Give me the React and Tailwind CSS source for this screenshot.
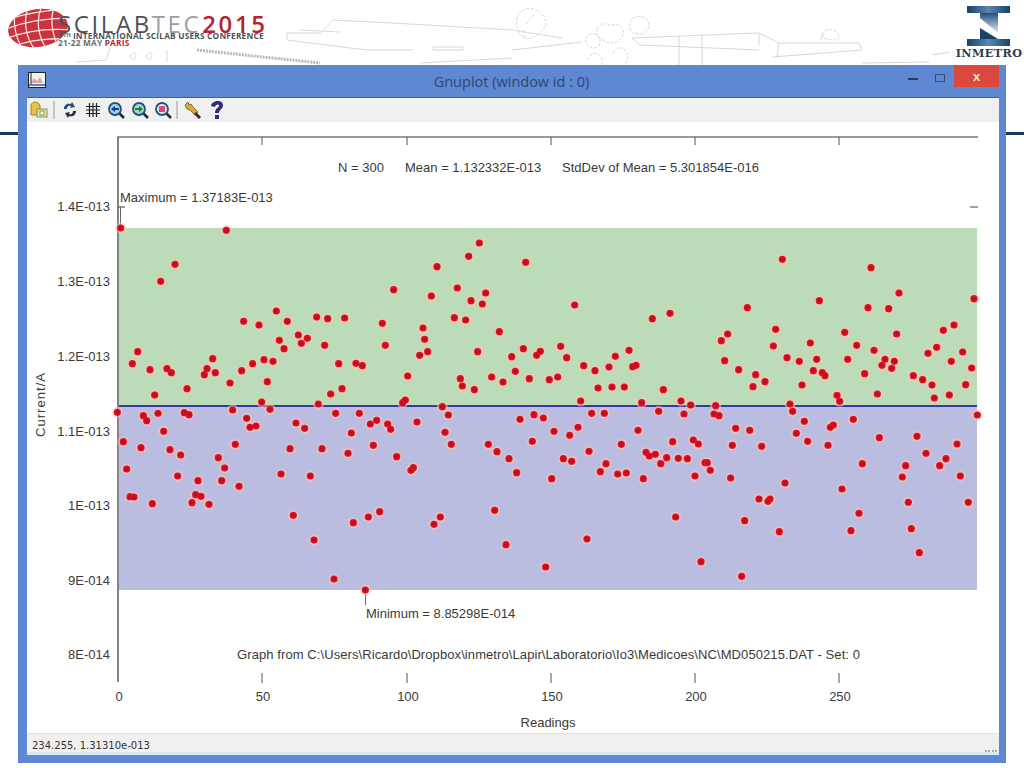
import React from 'react';

// Dot positions read off the plot, grouped by the crop they were read from: [left, top, [x, y, ...]] at 3x
const dotGroups = [
  [110, 220, [32,24,349,31,195,133,152,184,851,209,499,273,620,291,653,296,704,294,401,304,532,304,447,315,817,310,565,345,592,355,508,361,574,370,644,376,826,376,522,386,83,395,308,416,462,419,489,424,67,431,428,431,686,431,738,430,757,437,120,449,171,446,184,458,291,446,283,464,316,458,395,452,360,489,472,485,231,506,696,506,662,522,134,525,455,546,625,552,878,548]],
  [110, 400, [22,37,100,47,110,62,144,40,223,38,237,44,368,30,410,55,420,82,438,78,480,28,558,69,584,85,677,40,748,40,781,72,800,61,833,72,842,88,724,99,161,94,40,125,376,133,93,143,180,149,212,165,540,146,636,146,714,160,790,136,860,170,325,173,344,204,50,207,203,228,264,242,335,242,513,222,601,228,387,259,257,284,273,289,60,290,72,291,246,308,127,311,297,313,550,346,809,335,775,351,730,368,612,420,672,537,766,570]],
  [400, 220, [238,69,206,109,377,127,111,140,172,204,257,219,94,228,213,242,247,252,524,255,810,280,163,293,197,300,757,296,69,324,298,335,74,358,83,395,59,406,233,395,370,386,335,410,421,394,410,406,482,379,500,413,687,391,646,409,551,437,585,452,627,441,698,440,708,436,23,468,181,476,187,498,223,509,275,471,309,486,346,454,388,476,448,479,473,471,594,504,636,501,673,501,790,509,16,540,542,543,725,548,843,543]],
  [400, 400, [127,20,145,45,51,66,360,58,402,44,430,54,575,40,613,40,776,34,852,42,135,97,154,133,462,94,509,106,534,82,714,91,265,133,291,155,397,124,327,176,664,133,818,125,567,154,738,157,748,168,766,163,800,173,835,175,862,176,490,176,515,184,618,191,782,191,40,203,33,211,350,218,601,215,653,222,679,219,455,236,730,236,284,331,121,351,102,373,827,351,561,417,318,434,437,501]],
  [690, 220, [277,118,543,143,627,219,852,236,388,242,172,263,534,263,596,266,257,328,464,337,113,342,94,362,620,342,792,315,760,331,250,378,361,369,500,376,552,391,740,382,714,400,291,413,104,422,328,424,380,418,473,418,585,418,613,424,576,436,605,445,818,396,784,424,845,444,146,449,370,452,397,458,405,467,197,464,225,485,189,500,336,495,524,461,670,467,698,479,726,495,827,494,441,526,449,544,562,522,733,534,778,525,300,552,2,555]],
  [690, 400, [77,17,308,34,72,42,87,47,343,64,490,58,430,75,421,82,862,45,137,85,179,91,319,100,568,113,681,109,10,120,25,132,127,136,215,139,353,124,414,136,801,132,708,160,768,176,647,197,749,197,517,191,45,188,52,188,61,211,15,228,122,234,637,231,811,228,285,249,456,267,207,297,240,297,234,304,655,307,835,307,507,340,164,362,268,395,483,392,664,386,688,458,33,485,155,529]],
];

const dots = dotGroups.flatMap(([left, top, list]) => {
  const out = [];
  for (let i = 0; i < list.length; i += 2) {
    out.push([left + list[i] / 3, top + list[i + 1] / 3]);
  }
  return out;
});

const yLabels = [
  ['1.4E-013', 207],
  ['1.3E-013', 282],
  ['1.2E-013', 357],
  ['1.1E-013', 432],
  ['1E-013', 506],
  ['9E-014', 581],
  ['8E-014', 655],
];

const xLabels = [
  ['0', 119],
  ['50', 263],
  ['100', 408],
  ['150', 552],
  ['200', 696],
  ['250', 840],
];

const plotText = "fill-[#3a3a3a] text-[13px] font-['Liberation_Sans',sans-serif]";

function Plot() {
  return (
    <svg viewBox="27 122 972 611" className="block w-full h-full">
      <rect x="119" y="228" width="858" height="178" fill="#bcdcb9" />
      <rect x="119" y="406" width="858" height="184" fill="#babce0" />
      <line x1="119" y1="406" x2="977" y2="406" stroke="#0a0a8c" strokeWidth="1.5" />
      <path d="M118 682V137H978" fill="none" stroke="#333" strokeWidth="1.2" />
      <path d="M118 207h7M970 207h8" stroke="#444" strokeWidth="1" />
      <path d="M120.500 207v21M365.500 590v15" stroke="#666" strokeWidth="1" />
      {xLabels.slice(1).map(([, x]) => (
        <path key={x} d={`M${x - 1} 137v8M${x - 1} 673v10`} stroke="#555" strokeWidth="1" />
      ))}

      {dots.map(([x, y], i) => (
        <circle key={`h${i}`} cx={x} cy={y} r="5.500" fill="#ffc4ae" fillOpacity="0.55" />
      ))}
      {dots.map(([x, y], i) => (
        <g key={i}>
          <circle cx={x} cy={y} r="3.600" fill="#e50f1f" />
          <circle cx={x} cy={y} r="2.200" fill="#b3122a" />
        </g>
      ))}

      {yLabels.map(([label, y]) => (
        <text key={label} x="110" y={y + 4} textAnchor="end" className={plotText}>{label}</text>
      ))}
      {xLabels.map(([label, x]) => (
        <text key={label} x={x} y="701" textAnchor="middle" className={plotText}>{label}</text>
      ))}
      <text x="120" y="202" className={plotText}>Maximum = 1.37183E-013</text>
      <text x="366" y="618" className={plotText}>Minimum = 8.85298E-014</text>
      <text y="172" className={plotText}>
        <tspan x="338">N = 300</tspan>
        <tspan x="405">Mean = 1.132332E-013</tspan>
        <tspan x="562">StdDev of Mean = 5.301854E-016</tspan>
      </text>
      <text x="237" y="659" textLength="623" className={plotText}>Graph from C:\Users\Ricardo\Dropbox\inmetro\Lapir\Laboratorio\Io3\Medicoes\NC\MD050215.DAT - Set: 0</text>
      <text x="548" y="727" textAnchor="middle" className={plotText}>Readings</text>
      <text x="45" y="405" textAnchor="middle" textLength="64" transform="rotate(-90 45 405)" className={plotText}>Current/A</text>
    </svg>
  );
}

function ScilabLogo() {
  return (
    <div className="flex w-[270px] shrink-0 pl-[8px] pt-[8px]">
      <svg width="64" height="40" viewBox="0 0 64 40" className="shrink-0">
        <defs>
          <clipPath id="globe">
            <ellipse cx="30" cy="20" rx="30" ry="19" transform="rotate(-8 30 20)" />
          </clipPath>
        </defs>
        <g clipPath="url(#globe)">
          <rect width="64" height="40" fill="#c8343f" />
          <path d="M-2 12C15 6 40 2 62 1M-2 21C15 14 40 10 64 10M0 30C18 23 42 20 64 22M6 38C22 32 44 30 60 31" stroke="#f6e4e4" strokeWidth="1.300" fill="none" />
          <path d="M8 2C4 14 8 30 14 40M20 0C15 12 18 30 26 40M33 0C28 12 30 28 38 40M46 0C42 10 44 26 50 38" stroke="#f6e4e4" strokeWidth="1.300" fill="none" />
        </g>
      </svg>
      <div className="-ml-[14px] flex flex-col pt-[6px] font-['Open_Sans',sans-serif] whitespace-nowrap">
        <div className="h-[18px] text-[24px] leading-[19px] tracking-[2.600px]">
          <span className="text-[#4d5258]">SCILAB</span>
          <span className="text-[#9a9ea3]">TEC</span>
          <span className="ml-[1px] font-semibold text-[#b3262c]">2015</span>
        </div>
        <div className="text-[8.300px] leading-[7px] font-bold text-[#4d5258] tracking-[0.2px]">7ᵀᴴ INTERNATIONAL SCILAB USERS CONFERENCE</div>
        <div className="text-[8.300px] leading-[7px] font-bold text-[#6b6f74] tracking-[0.2px]">21-22 MAY <span className="text-[#b3262c]">PARIS</span></div>
      </div>
    </div>
  );
}

function Sketch() {
  // faint line drawing of the venue behind the header, in page coordinates
  return (
    <svg viewBox="70 0 880 65" className="block h-[65px] w-[880px] shrink-0 -ml-[200px]">
      <g fill="none" stroke="#d8d8d8" strokeWidth="1">
        <path d="M76 62l30-2 4-12M130 56c3-4 6-4 6 0s-5 4-6 0M146 56c3-4 6-4 6 0s-5 4-6 0M167 50v12" />
        <path d="M333 20l60 3 119 7M333 20l-13 13h-33v7l80 10h46M420 63l92-5M300 30l40 2M433 47h30v3h-30z" />
        <path d="M512 30l50 8M512 50l70-8M632 38l127-5v12M632 38l8 7 119 5M679 35v30M702 34v31M759 33l20 10h80l3 7-90 7" />
        <path d="M779 43l-2 14M820 40l4-6M862 63l67-1M932 55l18-3" />
        <g strokeDasharray="3 1.500">
          <path d="M517 18c2-8 12-12 20-8s12 14 6 20-12 10-18 8-10-12-8-20zM526 24l8-10M524 30v9" />
          <path d="M597 30c2-6 10-8 14-4 6-4 14 0 12 8s-10 10-16 8-12-6-10-12zM630 22c2-6 12-8 17-2s0 14-8 14-11-6-9-12zM586 38c2-5 8-6 12-2s2 12-4 12-10-5-8-10z" />
          <path d="M822 34c2-5 10-6 14-2s4 8 0 8-16 0-14-6zM588 60c1-5 6-8 10-6s6 8 3 12M613 54c2-6 8-8 12-4s4 10 0 14" />
        </g>
      </g>
      <path d="M197 50l123 13" stroke="#b9b9b9" strokeWidth="3" strokeDasharray="2 1" fill="none" />
    </svg>
  );
}

function InmetroLogo() {
  return (
    <div className="ml-auto flex w-[68px] flex-col items-center pt-[6px] pr-[2px]">
      <svg width="44" height="40" viewBox="968 6 44 40" className="block">
        <defs>
          <linearGradient id="bar" x1="0" x2="1" y1="0" y2="0">
            <stop offset="0" stopColor="#16426d" />
            <stop offset="0.5" stopColor="#5d86ad" />
            <stop offset="1" stopColor="#16426d" />
          </linearGradient>
          <linearGradient id="stem" x1="0" x2="0" y1="0" y2="1">
            <stop offset="0" stopColor="#1f4f7f" />
            <stop offset="1" stopColor="#e3ebf2" />
          </linearGradient>
        </defs>
        <rect x="968" y="6" width="43" height="7" fill="url(#bar)" />
        <rect x="968" y="39" width="43" height="7" fill="url(#bar)" />
        <polygon points="981,13 999,13 999,33 981,18" fill="url(#stem)" />
        <polygon points="981,28 999,39 981,39" fill="#16426d" />
      </svg>
      <div className="text-[11.200px] leading-[14px] font-bold tracking-[0.4px] text-[#2c3e50] font-['DejaVu_Serif',serif]">INMETRO</div>
    </div>
  );
}

function Separator() {
  return <div className="h-[18px] w-[2px] bg-[#c4c4c4]" />;
}

function LoadIcon() {
  return (
    <svg width="20" height="18" viewBox="0 0 20 18">
      <path d="M2 5c0-3 3-4 4-4s5 1 5 4v9H2z" fill="#e8c04a" stroke="#a8801e" />
      <rect x="8" y="8" width="10" height="8" fill="#dfe8b0" stroke="#7d9a4a" />
      <rect x="11" y="10" width="4" height="4" fill="#fff" stroke="#7d9a4a" />
    </svg>
  );
}

function RefreshIcon() {
  return (
    <svg width="14" height="16" viewBox="0 0 14 16">
      <path d="M1 7C1 3 4 1 8 2l1-2 3 5-5 1 1-2C5 3 4 5 4 7z" fill="#2c4a7c" />
      <path d="M13 9c0 4-3 6-7 5l-1 2-3-5 5-1-1 2c3 1 4-1 4-3z" fill="#24303f" />
    </svg>
  );
}

function GridIcon() {
  return (
    <svg width="14" height="14" viewBox="0 0 14 14">
      <path d="M3.500 0v14M7 0v14M10.500 0v14M0 3.500h14M0 7h14M0 10.500h14" stroke="#222" strokeWidth="1.200" />
    </svg>
  );
}

function ZoomIcon({ fill, inner }) {
  return (
    <svg width="17" height="17" viewBox="0 0 17 17">
      <path d="M11 11l5 5" stroke="#1d2a3a" strokeWidth="2.500" />
      <circle cx="7" cy="7" r="6" fill={fill} stroke="#1f5678" strokeWidth="1.800" />
      {inner}
    </svg>
  );
}

function WrenchIcon() {
  return (
    <svg width="17" height="17" viewBox="0 0 17 17">
      <path d="M0 3l3-3 1 3 2-1 2 3 5 5-3 3-5-5-3-1z" fill="#d8a93a" stroke="#6b5520" strokeWidth="0.800" />
      <path d="M10 11l5 5" stroke="#33302a" strokeWidth="3" />
    </svg>
  );
}

function HelpIcon() {
  return (
    <svg width="12" height="18" viewBox="0 0 12 18">
      <path d="M0 5C1-1 12-2 12 4.500c0 3.500-4 4-4 7.500H4c0-5 4-5 4-7.500C8 3 5 3 4 6z" fill="#2e2a7c" />
      <rect x="4" y="14" width="4" height="4" fill="#2e2a7c" />
    </svg>
  );
}

function WindowIcon() {
  return (
    <svg width="18" height="16" viewBox="0 0 18 16">
      <rect x="0.500" y="0.500" width="17" height="15" fill="#f4f1ee" stroke="#222" />
      <path d="M3 11l3-5 3 3 3-4 3 6z" fill="#d9a6a0" />
      <path d="M1 13h16" stroke="#3b5a9a" strokeWidth="1.500" />
      <path d="M3 1v11" stroke="#222" />
    </svg>
  );
}

function Toolbar() {
  return (
    <div className="flex h-[24px] items-center bg-[#f0f0f0] pl-[2px]">
      <LoadIcon />
      <div className="ml-[4px]"><Separator /></div>
      <div className="ml-[8px]"><RefreshIcon /></div>
      <div className="ml-[9px]"><GridIcon /></div>
      <div className="ml-[8px]">
        <ZoomIcon fill="#a9cbe6" inner={<path d="M3 7l4-3v2h4v2H7v2z" fill="#123f9c" />} />
      </div>
      <div className="ml-[7px]">
        <ZoomIcon fill="#a8d8c8" inner={<path d="M11 7L7 4v2H3v2h4v2z" fill="#1f7a4c" />} />
      </div>
      <div className="ml-[6px]">
        <ZoomIcon fill="#e6e6ee" inner={<rect x="4" y="4" width="6" height="6" fill="#d84a80" />} />
      </div>
      <div className="ml-[4px]"><Separator /></div>
      <div className="ml-[7px]"><WrenchIcon /></div>
      <div className="ml-[9px]"><HelpIcon /></div>
    </div>
  );
}

function GnuplotWindow() {
  return (
    <div className="flex w-[988px] shrink-0 flex-col bg-[#5f88d2] pl-[9px] pr-[7px] pb-[8px]">
      <div className="flex h-[33px] shrink-0 border-b border-[#3f5f9a]">
        <div className="flex w-[20px] items-center pl-[1px] pb-[2px]"><WindowIcon /></div>
        <div className="flex-1 pt-[8px] pl-[68px] text-center text-[14.500px] leading-[18px] text-[#33466b] font-['Open_Sans',sans-serif]">
          Gnuplot (window id : 0)
        </div>
        <div className="flex h-[22px] items-start">
          <div className="mt-[13px] h-[2px] w-[10px] bg-[#2c3a55]" />
          <div className="ml-[17px] mt-[9px] h-[8px] w-[10px] border border-[#3b4d75]" />
          <div className="ml-[9px] flex h-[22px] w-[45px] items-center justify-center bg-[#d9493f] text-[13px] font-bold leading-none text-[#fbe3d6]">
            x
          </div>
        </div>
      </div>
      <Toolbar />
      <div className="min-h-0 flex-1 bg-white"><Plot /></div>
      <div className="flex h-[22px] shrink-0 flex-col border-t border-[#e2e2e2] bg-[#f0f0f0]">
        <div className="flex flex-1 items-center pl-[5px] pt-[5px] text-[10px] leading-none text-[#333] font-['DejaVu_Sans',sans-serif]">
          234.255, 1.31310e-013
          <div className="ml-auto mt-[7px] mr-[2px] h-[5px] w-[12px] border-b-2 border-dotted border-[#a9a9a9]" />
        </div>
        <div className="h-[3px] bg-[#d6ebf1]" />
      </div>
    </div>
  );
}

export default function App() {
  return (
    <div className="h-[768px] w-[1024px] overflow-hidden bg-white font-['Liberation_Sans',sans-serif]">
      <header className="flex h-[65px] overflow-hidden">
        <ScilabLogo />
        <Sketch />
        <InmetroLogo />
      </header>
      <main className="flex h-[698px]">
        <div className="flex-1"><div className="mt-[67px] h-[3px] bg-[#17375e]" /></div>
        <GnuplotWindow />
        <div className="flex-1"><div className="mt-[67px] h-[3px] bg-[#17375e]" /></div>
      </main>
    </div>
  );
}
